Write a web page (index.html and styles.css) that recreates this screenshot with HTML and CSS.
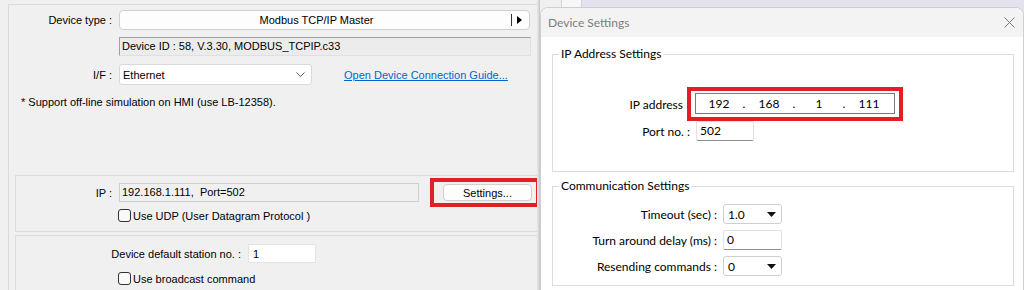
FILE: index.html
```html
<!DOCTYPE html>
<html lang="en">
<head>
    <meta charset="UTF-8">
    <title>Device Settings</title>
    <link rel="stylesheet" href="styles.css">
</head>
<body>
<div class="screen">

    <!-- Device properties panel (behind the dialog) -->
    <div class="device-panel">
        <div class="frame">
            <div class="row row-type">
                <span class="label">Device type :</span>
                <div class="type-button">
                    <span class="type-name">Modbus TCP/IP Master</span>
                    <span class="type-arrow">
                        <svg width="5" height="8" viewBox="0 0 5 8"><path d="M0 0 L5 4 L0 8 Z" fill="#000"/></svg>
                    </span>
                </div>
            </div>
            <div class="row row-id">
                <span class="label"></span>
                <div class="id-field">Device ID : 58, V.3.30, MODBUS_TCPIP.c33</div>
            </div>
            <div class="row row-if">
                <span class="label">I/F :</span>
                <div class="if-select">
                    <span>Ethernet</span>
                    <svg width="9" height="5" viewBox="0 0 9 5"><path d="M0.5 0.5 L4.5 4.5 L8.5 0.5" fill="none" stroke="#555" stroke-width="1"/></svg>
                </div>
                <a class="guide-link">Open Device Connection Guide...</a>
            </div>
            <p class="note">* Support off-line simulation on HMI (use LB-12358).</p>

            <div class="group group-ip">
                <div class="row row-ip">
                    <span class="label">IP :</span>
                    <div class="ip-field">192.168.1.111,&nbsp; Port=502</div>
                    <div class="highlight settings-box">
                        <button class="win-button">Settings...</button>
                    </div>
                </div>
                <label class="check-row"><span class="checkbox"></span>Use UDP (User Datagram Protocol )</label>
            </div>

            <div class="group group-station">
                <div class="row row-station">
                    <span class="label">Device default station no. :</span>
                    <div class="station-field">1</div>
                </div>
                <label class="check-row"><span class="checkbox"></span>Use broadcast command</label>
            </div>
        </div>
    </div>
    <div class="panel-edge"></div>

    <!-- Device Settings dialog -->
    <div class="desktop">
        <div class="dialog">
            <div class="titlebar">
                <span class="title">Device Settings</span>
                <svg class="close" width="11" height="11" viewBox="0 0 11 11"><path d="M0.5 0.5 L10.5 10.5 M10.5 0.5 L0.5 10.5" stroke="#7a7a7a" stroke-width="1"/></svg>
            </div>
            <div class="dialog-body">
                <fieldset class="box box-ip">
                    <legend>IP Address Settings</legend>
                    <div class="form-row row-address">
                        <span class="form-label">IP address</span>
                        <div class="highlight address-box">
                            <div class="address-field">
                                <span class="octet">192</span><span class="dot">.</span>
                                <span class="octet">168</span><span class="dot">.</span>
                                <span class="octet">1</span><span class="dot">.</span>
                                <span class="octet">111</span>
                            </div>
                        </div>
                    </div>
                    <div class="form-row row-port">
                        <span class="form-label">Port no. :</span>
                        <div class="text-input port-input">502</div>
                    </div>
                </fieldset>

                <fieldset class="box box-comm">
                    <legend>Communication Settings</legend>
                    <div class="form-row comm-row">
                        <span class="form-label">Timeout (sec) :</span>
                        <div class="combo"><span>1.0</span><svg width="9" height="5" viewBox="0 0 9 5"><path d="M0 0 L9 0 L4.5 5 Z" fill="#111"/></svg></div>
                    </div>
                    <div class="form-row comm-row">
                        <span class="form-label">Turn around delay (ms) :</span>
                        <div class="text-input delay-input">0</div>
                    </div>
                    <div class="form-row comm-row">
                        <span class="form-label">Resending commands :</span>
                        <div class="combo"><span>0</span><svg width="9" height="5" viewBox="0 0 9 5"><path d="M0 0 L9 0 L4.5 5 Z" fill="#111"/></svg></div>
                    </div>
                </fieldset>
            </div>
        </div>
    </div>
</div>
</body>
</html>
```

FILE: styles.css
```css
/* Basic reset */
* {
    margin: 0;
    padding: 0;
    box-sizing: border-box;
}

body {
    width: 1024px;
    height: 290px;
    overflow: hidden;
    background-color: #f0f0f0;
    font-family: 'Liberation Sans', Arial, sans-serif;
    font-size: 11px;
    color: #000;
}

.screen {
    display: flex;
    height: 290px;
}

/* Left device panel */
.device-panel {
    width: 537px;
    flex: none;
    padding: 4px 0 0 8px;
}

.frame {
    height: 100%;
    border-left: 1px solid #dadada;
    border-top: 1px solid #dadada;
}

.panel-edge {
    width: 3px;
    flex: none;
    background: linear-gradient(to right, #e8e8e8, #d4d4d4 70%, #bdbdbd);
}

.row {
    display: flex;
    align-items: center;
    gap: 7px;
}

.label {
    width: 103px;
    flex: none;
    text-align: right;
    white-space: nowrap;
}

.row-type {
    margin-top: 5px;
    height: 20px;
}

.type-button {
    width: 411px;
    height: 20px;
    display: flex;
    align-items: center;
    background-color: #fdfdfd;
    border: 1px solid #d0d0d0;
    border-radius: 4px;
}

.type-name {
    flex: 1;
    text-align: center;
    padding-left: 2px;
}

.type-arrow {
    display: flex;
    align-items: center;
    height: 12px;
    padding: 0 7px 0 5px;
    border-left: 1px solid #333;
}

.row-id {
    margin-top: 7px;
}

.id-field {
    width: 412px;
    height: 19px;
    padding-left: 2px;
    line-height: 17px;
    background-color: #ececec;
    border: 1px solid #e0e0e0;
    border-top-color: #a0a0a0;
    border-left-color: #a0a0a0;
}

.row-if {
    margin-top: 8px;
}

.if-select {
    width: 193px;
    height: 21px;
    display: flex;
    align-items: center;
    justify-content: space-between;
    padding: 0 6px 0 3px;
    background-color: #fff;
    border: 1px solid #d9d9d9;
    border-radius: 3px;
}

.guide-link {
    margin-left: 25px;
    color: #0066cc;
    text-decoration: underline;
}

.note {
    margin: 10px 0 0 12px;
    line-height: 14px;
}

/* Group boxes on the left */
.group {
    margin-left: 6px;
    border: 1px solid #dcdcdc;
    border-right: none;
}

.group .label {
    width: 96px;
}

.group-ip {
    margin-top: 66px;
    padding-bottom: 9px;
}

.row-ip {
    margin-top: 2px;
}

.ip-field {
    width: 300px;
    height: 19px;
    padding-left: 2px;
    line-height: 17px;
    border: 1px solid #cfcfcf;
    background-color: #f0f0f0;
}

.highlight {
    border: 4px solid #e31e24;
}

.settings-box {
    margin-left: 4px;
    margin-right: -3px;
    padding: 2px 4px 2px 9px;
}

.win-button {
    display: block;
    width: 89px;
    height: 17px;
    font-family: inherit;
    font-size: 11px;
    color: #000;
    background-color: #fdfdfd;
    border: 1px solid #d0d0d0;
    border-radius: 4px;
}

.check-row {
    display: flex;
    align-items: center;
    gap: 2px;
    margin: 2px 0 0 102px;
    height: 13px;
}

.checkbox {
    width: 13px;
    height: 13px;
    border: 1px solid #333;
    border-radius: 3px;
    background-color: #f9f9f9;
}

.group-station {
    margin-top: 3px;
    height: 60px;
}

.group-station .label {
    width: 225px;
}

.row-station {
    margin-top: 8px;
}

.station-field {
    width: 68px;
    height: 19px;
    padding-left: 4px;
    line-height: 18px;
    background-color: #fff;
    border: 1px solid #e4e4e4;
}

.group-station .check-row {
    margin-top: 9px;
}

/* Desktop and dialog */
.desktop {
    flex: 1;
    padding-top: 7px;
    background: linear-gradient(to right, #f0f0f0 21px, #d6d6d6 21px, #d6d6d6 22px, #f7f7f7 22px, #f7f7f7 41px, #d6d6d6 41px, #d6d6d6 42px, #e3e3ef 42px);
}

.dialog {
    height: 283px;
    background-color: #fff;
    border: 1px solid #cfcfcf;
    border-bottom: none;
    border-radius: 8px 8px 0 0;
    overflow: hidden;
    font-family: Lato, 'Liberation Sans', sans-serif;
    font-size: 12px;
}

.titlebar {
    height: 29px;
    display: flex;
    align-items: center;
    justify-content: space-between;
    padding: 0 8px 0 7px;
    background-color: #f3f3f3;
}

.title {
    font-size: 12px;
    color: #7d7d7d;
}

.dialog-body {
    padding: 0 9px 0 11px;
}

.box {
    border: 1px solid #dcdcdc;
}

.box legend {
    margin-left: 6px;
    padding: 0 2px;
    line-height: 14px;
}

.box-ip {
    margin-top: 10px;
    padding: 26px 0 30px;
}

.box-comm {
    margin-top: 7px;
    padding: 11px 0 9px;
}

.form-row {
    display: flex;
    align-items: center;
}

.form-label {
    flex: none;
    text-align: right;
    white-space: nowrap;
}

.row-address .form-label {
    width: 130px;
    margin-right: 4px;
}

.address-box {
    padding: 2px 4px 3px;
}

.address-field {
    width: 200px;
    height: 21px;
    display: flex;
    align-items: center;
    padding-left: 5px;
    border: 1px solid #7a7a7a;
}

.octet {
    width: 36px;
    text-align: center;
}

.dot {
    width: 14px;
    text-align: center;
}

.row-port .form-label {
    width: 137px;
    margin-right: 6px;
}

.text-input {
    height: 20px;
    padding-left: 3px;
    line-height: 18px;
    background-color: #fff;
    border: 1px solid #e2e2e2;
    border-bottom-color: #8c8c8c;
    border-radius: 2px;
}

.port-input {
    width: 58px;
}

.comm-row .form-label {
    width: 164px;
    margin-right: 6px;
}

.comm-row + .comm-row {
    margin-top: 6px;
}

.combo {
    width: 59px;
    height: 20px;
    display: flex;
    align-items: center;
    justify-content: space-between;
    padding: 0 5px 0 4px;
    background-color: #fff;
    border: 1px solid #cfcfcf;
    border-radius: 3px;
}

.delay-input {
    width: 59px;
}
```
